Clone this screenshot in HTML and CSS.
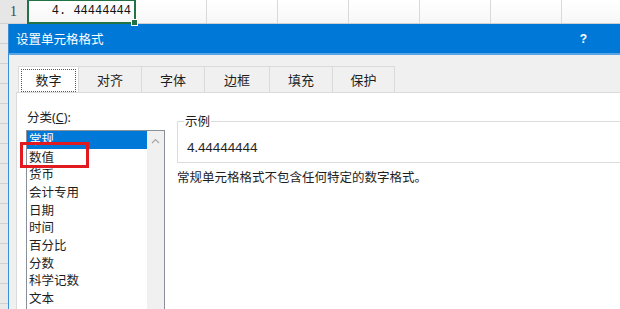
FILE: index.html
```html
<!DOCTYPE html>
<html lang="zh-CN">
<head>
  <meta charset="UTF-8" />
  <meta name="viewport" content="width=device-width, initial-scale=1.0"/>
  <title>设置单元格格式</title>
  <link rel="stylesheet" href="styles.css">
</head>
<body>

  <div class="sheet-row">
    <div class="row-head">1</div>
    <div class="cell active">4. 44444444<span class="fill-handle"></span></div>
    <div class="cell"></div>
    <div class="cell"></div>
    <div class="cell"></div>
    <div class="cell"></div>
    <div class="cell"></div>
    <div class="cell"></div>
    <div class="cell"></div>
  </div>

  <div class="below">
    <div class="left-strip"></div>

    <div class="dialog">
      <div class="title-bar">
        <span class="title">设置单元格格式</span>
        <span class="help">?</span>
      </div>

      <div class="dialog-body">
        <div class="tabs">
          <div class="tab selected"><span>数字</span></div>
          <div class="tab w63">对齐</div>
          <div class="tab w63">字体</div>
          <div class="tab w65">边框</div>
          <div class="tab w63">填充</div>
          <div class="tab w62">保护</div>
        </div>

        <div class="tab-page">
          <div class="category">
            <div class="label">分类(<u>C</u>):</div>
            <div class="listbox">
              <ul class="items">
                <li class="current">常规</li>
                <li>数值</li>
                <li>货币</li>
                <li>会计专用</li>
                <li>日期</li>
                <li>时间</li>
                <li>百分比</li>
                <li>分数</li>
                <li>科学记数</li>
                <li>文本</li>
              </ul>
              <div class="scrollbar">
                <svg class="arrow" width="9" height="6" viewBox="0 0 9 6">
                  <path d="M1 5 L4.5 1.5 L8 5" fill="none" stroke="#a6a6a6" stroke-width="1.2"/>
                </svg>
              </div>
              <span class="mark"></span>
            </div>
          </div>

          <div class="detail">
            <fieldset class="sample">
              <legend>示例</legend>
              <div class="sample-value">4.44444444</div>
            </fieldset>
            <p class="desc">常规单元格格式不包含任何特定的数字格式。</p>
          </div>
        </div>
      </div>
    </div>
  </div>

</body>
</html>
```

FILE: styles.css
```css
body {
  margin: 0;
  width: 620px;
  height: 309px;
  overflow: hidden;
  background: #fff;
  font-family: 'Noto Sans', 'Noto Sans CJK SC', sans-serif;
  font-size: 12.5px;
  color: #1e1e1e;
}

.sheet-row {
  display: flex;
  height: 23px;
  border-bottom: 1px solid #d0d0d0;
  background: linear-gradient(#fff, #f7f7f7);
}

.row-head {
  width: 27px;
  flex: none;
  background: #e6e6e6;
  border-right: 1px solid #c4c4c4;
  font-family: 'Liberation Serif', serif;
  font-size: 14px;
  color: #444;
  line-height: 23px;
  text-indent: 10px;
}

.cell {
  width: 70px;
  flex: none;
  border-right: 1px solid #d9d9d9;
}

.cell.active {
  position: relative;
  width: 102px;
  border: 2px solid #217346;
  border-top: 1px solid #217346;
  margin-left: -1px;
  height: 21px;
  text-align: right;
  padding-right: 3px;
  font-family: 'Liberation Mono', monospace;
  font-size: 12px;
  line-height: 21px;
  color: #111;
}

.fill-handle {
  position: absolute;
  right: -4px;
  bottom: -4px;
  width: 5px;
  height: 5px;
  background: #217346;
  border: 1px solid #fff;
}

.below {
  display: flex;
  height: 285px;
  overflow: hidden;
}

.left-strip {
  width: 8px;
  flex: none;
  background: repeating-linear-gradient(#e9e9e9 0, #e9e9e9 19px, #d2d2d2 19px, #d2d2d2 20px);
}

.dialog {
  display: flex;
  flex-direction: column;
  width: 640px;
  flex: none;
  background: #f0f0f0;
  border-left: 1px solid #3a8fd9;
}

.title-bar {
  display: flex;
  align-items: center;
  flex: none;
  height: 29px;
  background: #0078d7;
  border-bottom: 2px solid #5aa6e4;
  color: #fff;
  font-size: 12.5px;
  padding-left: 7px;
}

.help {
  margin-left: auto;
  padding-right: 62px;
  font-family: 'Liberation Sans', sans-serif;
  font-weight: bold;
  font-size: 12px;
}

.dialog-body {
  display: flex;
  flex-direction: column;
  flex: 1;
  min-height: 0;
  padding: 11px 0 0 7px;
}

.tabs {
  display: flex;
  flex: none;
  margin-left: 2px;
  height: 26px;
}

.tab {
  width: 62px;
  box-sizing: border-box;
  border: 1px solid #dadada;
  border-bottom: none;
  border-left: none;
  background: #f0f0f0;
  text-align: center;
  line-height: 26px;
  font-size: 13px;
}

.tab.w62 { width: 62px; }
.tab.w63 { width: 63px; }
.tab.w65 { width: 65px; }

.tab.selected {
  width: 61px;
  background: #fff;
  border-left: 1px solid #dadada;
  padding: 2px;
}

.tab.selected span {
  display: block;
  height: 21px;
  line-height: 21px;
  border: 1px dotted #555;
}

.tab-page {
  display: flex;
  gap: 12px;
  flex: 1;
  min-height: 0;
  background: #fff;
  border-top: 1px solid #dadada;
  border-left: 1px solid #dadada;
  padding-left: 10px;
}

.category {
  display: flex;
  flex-direction: column;
}

.category .label {
  margin-top: 16px;
  line-height: 17px;
}

.listbox {
  position: relative;
  display: flex;
  flex: 1;
  margin-top: 4px;
  margin-left: -1px;
  width: 137px;
  border: 1px solid #8a8f98;
  border-bottom: none;
}

.items {
  list-style: none;
  margin: 0;
  padding: 0;
  flex: 1;
}

.items li {
  height: 17.67px;
  line-height: 17.67px;
  padding-left: 2px;
}

.items li.current {
  background: #0078d7;
  color: #fff;
}

.scrollbar {
  width: 17px;
  flex: none;
  background: #f0f0f0;
  text-align: center;
}

.scrollbar .arrow {
  margin-top: 5px;
}

.mark {
  position: absolute;
  left: -7px;
  top: 11px;
  width: 63px;
  height: 20px;
  border: 3px solid #e2191f;
}

.detail {
  flex: 1;
  margin-top: 20px;
}

.sample {
  margin: 0;
  padding: 0 0 6px 6px;
  border: 1px solid #dcdcdc;
}

.sample legend {
  padding: 0 1px;
  line-height: 17px;
}

.sample-value {
  margin: 9px 0 0 3px;
  line-height: 17px;
  font-size: 13px;
}

.desc {
  margin: 6px 0 0 0;
  line-height: 17px;
  font-size: 12.5px;
}
```
